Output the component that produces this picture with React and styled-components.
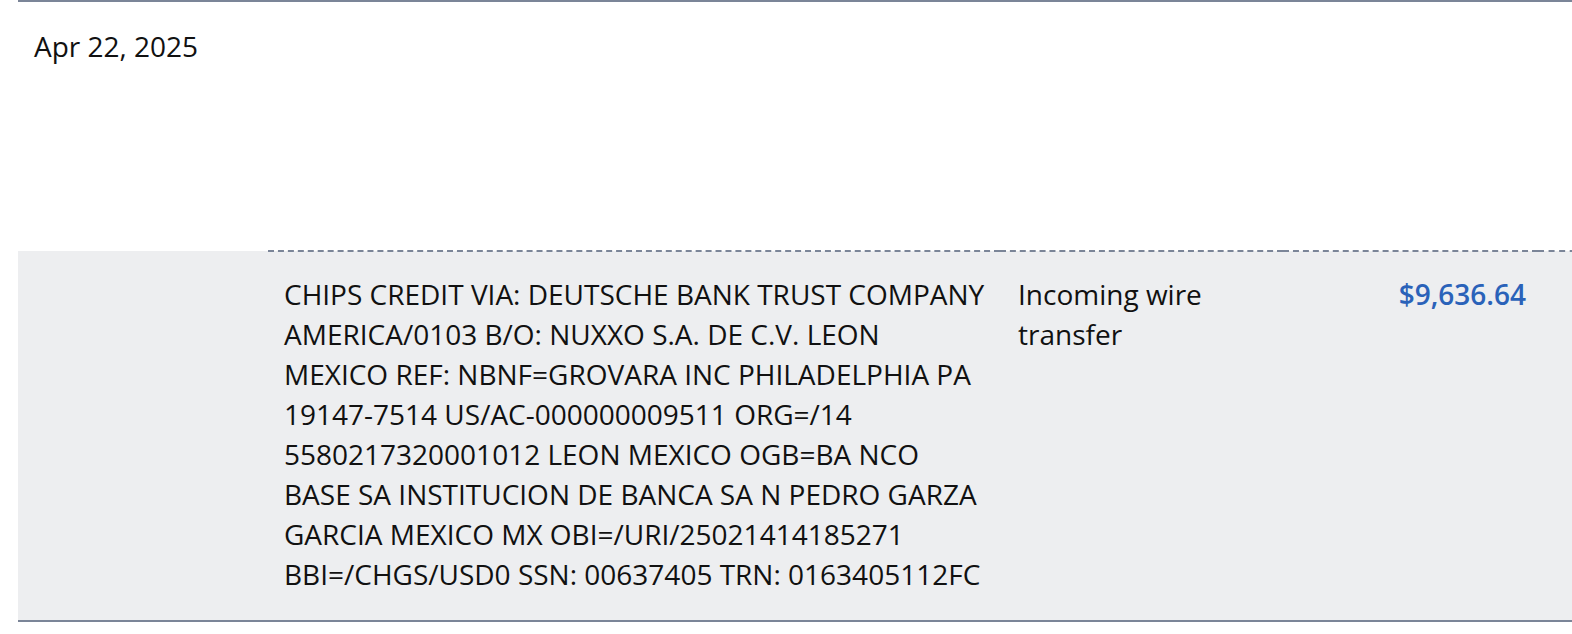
import React from 'react';
import styled, { createGlobalStyle } from 'styled-components';

const GlobalStyle = createGlobalStyle`
  body {
    margin: 0;
    background: #fff;
    overflow: hidden;
    font-family: "Open Sans", "Noto Sans", sans-serif;
    color: #111;
  }
`;

const Wrap = styled.div`
  padding-left: 18px;
  width: 1600px;
`;

const Table = styled.table`
  width: 100%;
  table-layout: fixed;
  border-collapse: collapse;
  border-top: 2px solid #7b8598;
  border-bottom: 2px solid #7b8598;
  font-size: 28px;
  line-height: 40px;
`;

const DateCell = styled.td`
  padding: 24px 16px;
  height: 250px;
  box-sizing: border-box;
  vertical-align: top;
`;

const DetailRow = styled.tr`
  background: #edeef0;
`;

const Cell = styled.td`
  vertical-align: top;
  padding: 22px ${(p) => p.$pr || '16px'} 26px ${(p) => p.$pl || '16px'};
  text-align: ${(p) => (p.$right ? 'right' : 'left')};
  border-top: ${(p) => (p.$dashed ? '2px dashed #7b8598' : 'none')};
  box-sizing: border-box;
`;

const Amount = styled.span`
  color: #2a62b9;
  font-weight: 600;
`;

export default function App() {
  return (
    <>
      <GlobalStyle />
      <Wrap>
        <Table>
          <colgroup>
            <col style={{ width: 250 }} />
            <col style={{ width: 732 }} />
            <col style={{ width: 283 }} />
            <col style={{ width: 255 }} />
            <col />
          </colgroup>
          <tbody>
            <tr>
              <DateCell colSpan={5}>Apr 22, 2025</DateCell>
            </tr>
            <DetailRow>
              <Cell />
              <Cell $dashed $pr="10px">
                CHIPS CREDIT VIA: DEUTSCHE BANK TRUST COMPANY AMERICA/0103 B/O: NUXXO S.A. DE C.V. LEON
                MEXICO REF: NBNF=GROVARA INC PHILADELPHIA PA 19147-7514 US/AC-000000009511 ORG=/14
                5580217320001012 LEON MEXICO OGB=BA NCO BASE SA INSTITUCION DE BANCA SA N PEDRO GARZA
                GARCIA MEXICO MX OBI=/URI/25021414185271 BBI=/CHGS/USD0 SSN: 00637405 TRN: 0163405112FC
              </Cell>
              <Cell $dashed $pl="18px">Incoming wire transfer</Cell>
              <Cell $dashed $right $pr="12px">
                <Amount>$9,636.64</Amount>
              </Cell>
              <Cell $dashed />
            </DetailRow>
          </tbody>
        </Table>
      </Wrap>
    </>
  );
}
